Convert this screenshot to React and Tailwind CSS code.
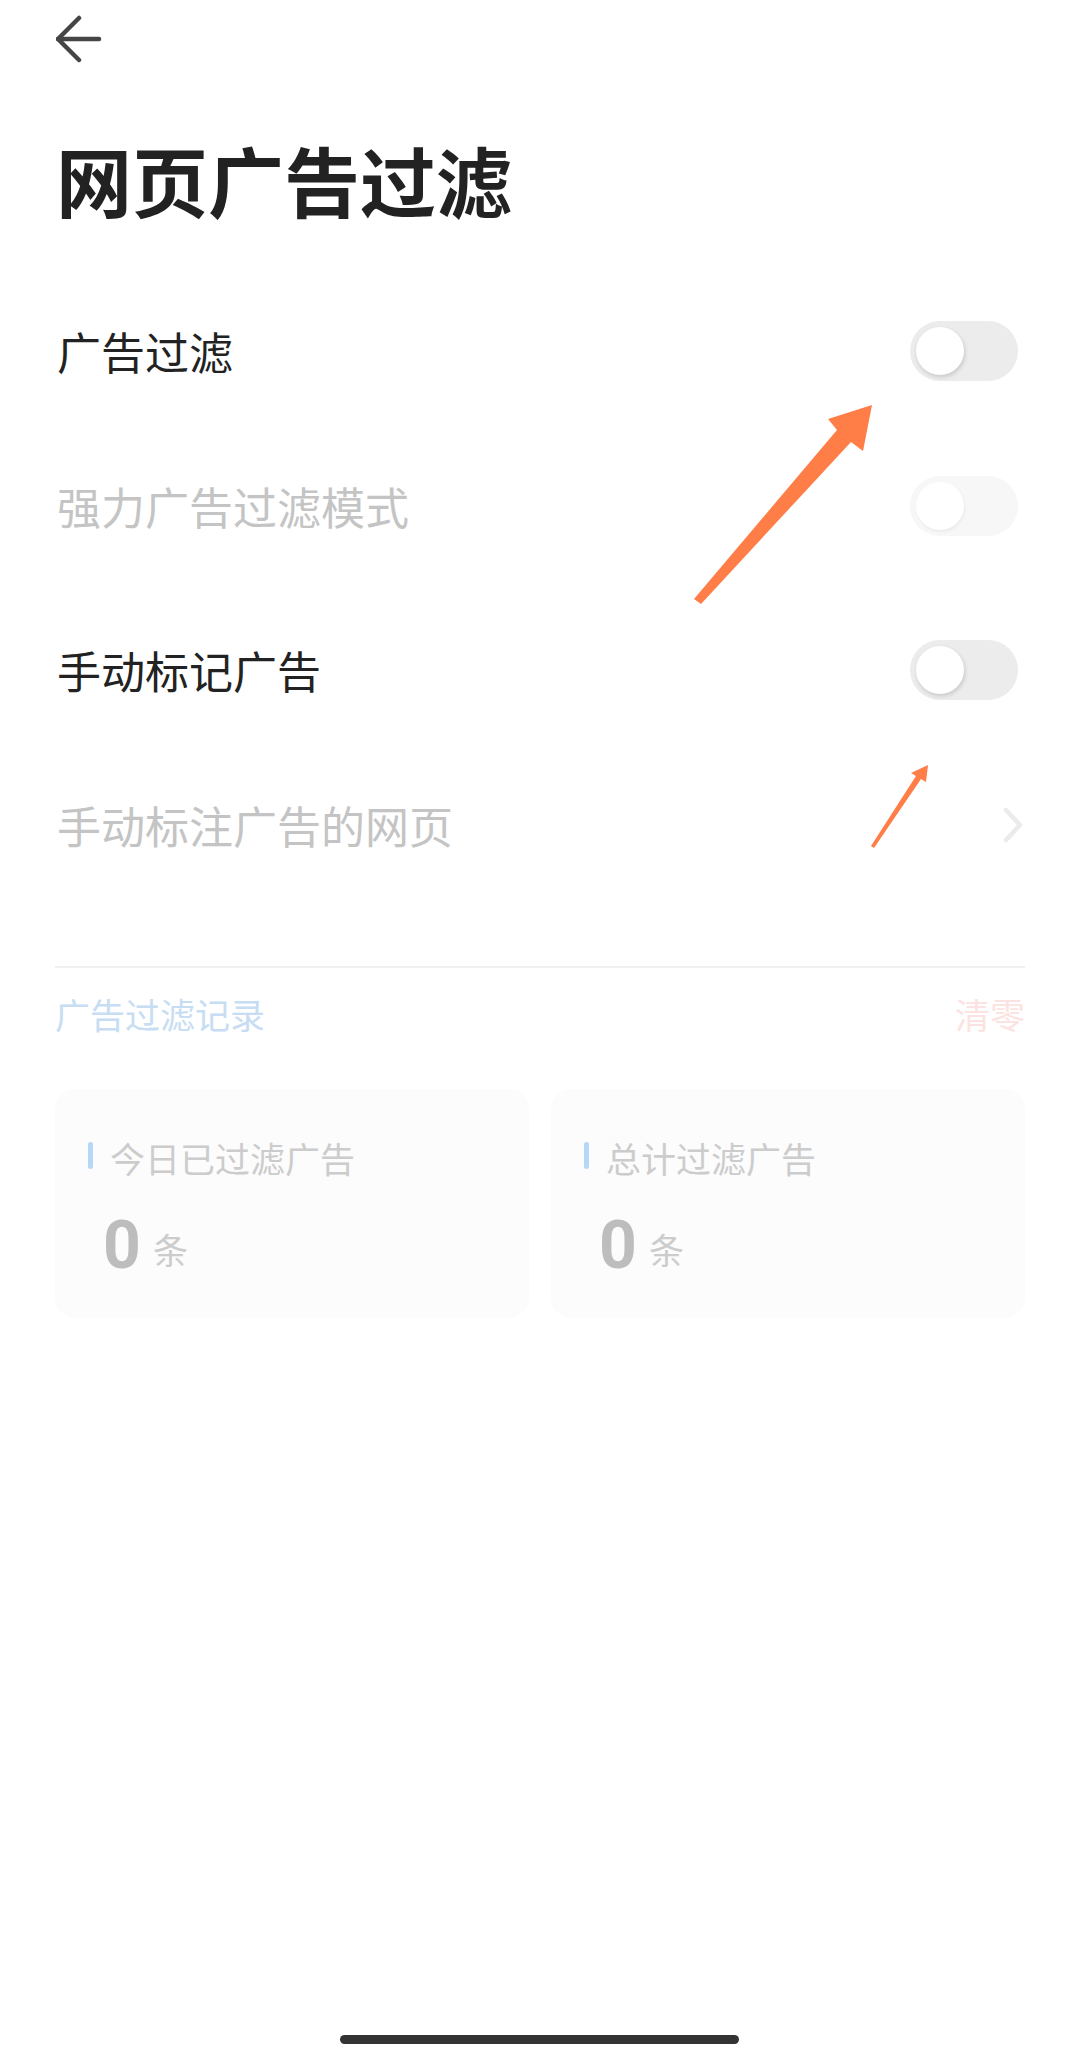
import React from "react";

const CJK = { fontFamily: '"Noto Sans CJK SC", "Noto Sans", sans-serif' };

function Toggle({ disabled }) {
  return (
    <div
      className={
        "w-[108px] h-[60px] rounded-full flex items-center pl-[6px] " +
        (disabled ? "bg-[#f7f7f7]" : "bg-[#ececec]")
      }
    >
      <div
        className={
          "w-[48px] h-[48px] rounded-full bg-white " +
          (disabled
            ? "shadow-[1px_2px_3px_rgba(0,0,0,0.05)]"
            : "shadow-[1px_2px_4px_rgba(0,0,0,0.16)]")
        }
      />
    </div>
  );
}

function Row({ label, disabled, right }) {
  return (
    <div className="h-[155px] flex items-center justify-between pl-[57px] pr-[55px]">
      <span
        className={
          "text-[44px] leading-none " +
          (disabled ? "text-[#c4c4c4]" : "text-[#222222]")
        }
      >
        {label}
      </span>
      {right}
    </div>
  );
}

function StatCard({ label }) {
  return (
    <div className="flex-1 h-[229px] rounded-[20px] bg-[#fcfcfc] pl-[33px] pt-[51px]">
      <div className="flex items-center h-[34px]">
        <div className="w-[5px] h-[27px] rounded-full bg-[#b8d6f7] mt-[-4px]" />
        <span className="ml-[17px] text-[35px] leading-none text-[#cccccc]">
          {label}
        </span>
      </div>
      <div className="flex items-end mt-[39px] ml-[15px]">
        <span
          className="text-[66px] leading-none font-bold text-[#bdbdbd]"
          style={{ fontFamily: "Roboto, sans-serif" }}
        >
          0
        </span>
        <span className="ml-[12px] mb-[13px] text-[35px] leading-none text-[#cccccc]">
          条
        </span>
      </div>
    </div>
  );
}

export default function App() {
  return (
    <div
      className="relative w-[1073px] min-h-[2062px] bg-white flex flex-col"
      style={CJK}
    >
      <svg
        className="ml-[56px] mt-[15px] block"
        width="46"
        height="48"
        viewBox="0 0 46 48"
        fill="none"
        stroke="#454545"
        strokeWidth="4.5"
        strokeLinecap="round"
        strokeLinejoin="round"
      >
        <path d="M2 24 H43" />
        <path d="M23 3 L2 24 L23 45" />
      </svg>

      <h1 className="ml-[56px] mt-[78px] text-[76px] leading-[76px] font-bold text-[#222222]">
        网页广告过滤
      </h1>

      <div className="mt-[56px]">
        <Row label="广告过滤" right={<Toggle />} />
        <Row label="强力广告过滤模式" disabled right={<Toggle disabled />} />
        <div className="h-[9px]" />
        <Row label="手动标记广告" right={<Toggle />} />
        <Row
          label="手动标注广告的网页"
          disabled
          right={
            <svg
              className="mr-[-6px]"
              width="22"
              height="38"
              viewBox="0 0 22 38"
              fill="none"
              stroke="#ebebeb"
              strokeWidth="4.5"
              strokeLinecap="round"
              strokeLinejoin="round"
            >
              <path d="M4 4 L18 19 L4 34" />
            </svg>
          }
        />
      </div>

      <div className="ml-[55px] mr-[48px] mt-[64px] h-[2px] bg-[#f0f0f0]" />

      <div className="ml-[55px] mr-[48px] mt-[28px] flex items-center justify-between">
        <span className="text-[35px] leading-[36px] text-[#c7ddf3]">广告过滤记录</span>
        <span className="text-[35px] leading-[36px] text-[#fce3e1]">清零</span>
      </div>

      <div className="ml-[55px] mr-[48px] mt-[57px] flex gap-[22px]">
        <StatCard label="今日已过滤广告" />
        <StatCard label="总计过滤广告" />
      </div>

      <div className="mt-auto mb-[18px] ml-[340px] w-[399px] h-[9px] rounded-full bg-[#333333]" />

      <svg
        className="absolute top-0 left-0 pointer-events-none"
        width="1073"
        height="2062"
        viewBox="0 0 1073 2062"
      >
        <polygon
          fill="#ff7d47"
          points="694,599 837,430 828,419 872,405 863,451 851,442 701,604"
        />
        <polygon
          fill="#ff7d47"
          points="871,846 916,776 911,773 928,765 926,782 921,779 874,848"
        />
      </svg>
    </div>
  );
}
